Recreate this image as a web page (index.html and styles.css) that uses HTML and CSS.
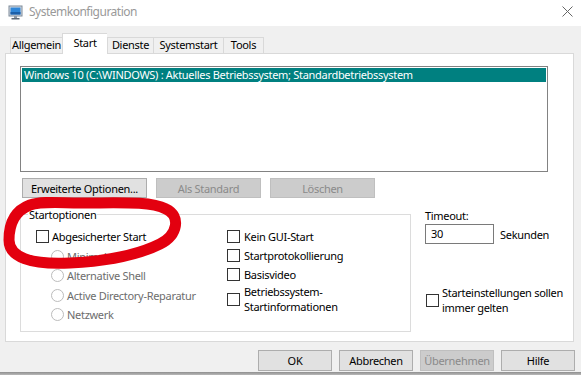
FILE: index.html
```html
<!DOCTYPE html>
<html lang="de">
<head>
    <meta charset="UTF-8">
    <meta name="viewport" content="width=device-width, initial-scale=1.0">
    <title>Systemkonfiguration</title>
    <link rel="stylesheet" href="styles.css">
</head>
<body>
    <div class="titlebar">
        <svg class="app-icon" width="15" height="15" viewBox="0 0 15 15">
            <rect x="1" y="1" width="13" height="10" fill="#d7dde5" stroke="#7d8a99"/>
            <rect x="2.5" y="2.5" width="10" height="7" fill="#2f86d8"/>
            <rect x="2.5" y="7" width="10" height="2.5" fill="#1c5fa8"/>
            <rect x="6" y="11" width="3" height="2" fill="#8b96a3"/>
            <rect x="3.5" y="13" width="8" height="1.5" fill="#5f6b78"/>
        </svg>
        <span class="title">Systemkonfiguration</span>
        <svg class="close" width="11" height="11" viewBox="0 0 11 11">
            <path d="M0.5 0.5L10.5 10.5M10.5 0.5L0.5 10.5" stroke="#666" stroke-width="1"/>
        </svg>
    </div>

    <div class="dialog">
        <div class="tabs">
            <div class="tab tab-allgemein">Allgemein</div>
            <div class="tab tab-start active">Start</div>
            <div class="tab tab-dienste">Dienste</div>
            <div class="tab tab-systemstart">Systemstart</div>
            <div class="tab tab-tools">Tools</div>
        </div>

        <div class="panel">
            <div class="listbox">
                <div class="list-item selected">Windows 10 (C:\WINDOWS) : Aktuelles Betriebssystem; Standardbetriebssystem</div>
            </div>

            <div class="btn-row">
                <button class="btn btn-wide">Erweiterte Optionen...</button>
                <button class="btn btn-mid" disabled>Als Standard</button>
                <button class="btn btn-mid" disabled>Löschen</button>
            </div>

            <div class="lower">
                <div class="group">
                    <span class="group-title">Startoptionen</span>
                    <div class="group-cols">
                        <div class="col-left">
                            <div class="opt opt-tall">
                                <span class="check"></span>
                                <span>Abgesicherter Start</span>
                            </div>
                            <div class="opt opt-tall radio-opt">
                                <span class="radio"></span>
                                <span>Minimal</span>
                            </div>
                            <div class="opt opt-tall radio-opt">
                                <span class="radio"></span>
                                <span>Alternative Shell</span>
                            </div>
                            <div class="opt opt-tall radio-opt">
                                <span class="radio"></span>
                                <span>Active Directory-Reparatur</span>
                            </div>
                            <div class="opt opt-tall radio-opt">
                                <span class="radio"></span>
                                <span>Netzwerk</span>
                            </div>
                        </div>
                        <div class="col-right">
                            <div class="opt">
                                <span class="check"></span>
                                <span>Kein GUI-Start</span>
                            </div>
                            <div class="opt">
                                <span class="check"></span>
                                <span>Startprotokollierung</span>
                            </div>
                            <div class="opt">
                                <span class="check"></span>
                                <span>Basisvideo</span>
                            </div>
                            <div class="opt opt-multi">
                                <span class="check"></span>
                                <span>Betriebssystem-<br>Startinformationen</span>
                            </div>
                        </div>
                    </div>
                </div>

                <div class="side">
                    <div class="timeout-label">Timeout:</div>
                    <div class="timeout-row">
                        <div class="textbox">30</div>
                        <span>Sekunden</span>
                    </div>
                    <div class="opt opt-multi persist">
                        <span class="check"></span>
                        <span>Starteinstellungen sollen<br>immer gelten</span>
                    </div>
                </div>
            </div>
        </div>

        <div class="footer">
            <button class="btn btn-foot">OK</button>
            <button class="btn btn-foot">Abbrechen</button>
            <button class="btn btn-foot" disabled>Übernehmen</button>
            <button class="btn btn-foot">Hilfe</button>
        </div>
    </div>
    <div class="shadow"></div>

    <!-- rote Markierung über dem Dialog -->
    <svg class="marker" width="200" height="100" viewBox="0 180 200 100">
        <path d="M9 240 C9 224 14 211 30 205 C42 201 60 203 80 203 C120 203 150 201 166 209 C181 216 178 235 160 244 C140 254 110 261 70 263 C30 265 9 257 9 240 Z"
              fill="none" stroke="#e3000f" stroke-width="11" stroke-linejoin="round"/>
    </svg>
</body>
</html>
```

FILE: styles.css
```css
* {
    margin: 0;
    padding: 0;
    box-sizing: border-box;
}

html, body {
    width: 581px;
    height: 375px;
    overflow: hidden;
}

body {
    position: relative;
    font-family: "Noto Sans", "Open Sans", sans-serif;
    font-size: 11px;
    letter-spacing: -0.3px;
    color: #000;
    background-color: #f0f0f0;
}

/* Titelleiste */
.titlebar {
    height: 26px;
    background-color: #fff;
    display: flex;
    align-items: center;
}

.app-icon {
    margin-left: 8px;
    margin-top: -2px;
}

.title {
    margin-left: 6px;
    color: #999;
    font-size: 12px;
    letter-spacing: -0.5px;
    margin-top: -3px;
}

.close {
    margin-left: auto;
    margin-right: 8px;
    margin-top: -4px;
}

/* Dialog */
.dialog {
    height: 346px;
    padding: 7px 0 0 5px;
}

.tabs {
    display: flex;
    align-items: flex-end;
    height: 20px;
    padding-left: 5px;
}

.tab {
    height: 16px;
    line-height: 14px;
    text-align: center;
    border: 1px solid #d9d9d9;
    border-right: none;
    border-bottom: none;
    background-color: #f0f0f0;
}

.tab-tools {
    border-right: 1px solid #d9d9d9;
}

.tab.active {
    height: 21px;
    line-height: 18px;
    background-color: #fff;
    margin-bottom: -1px;
    position: relative;
    z-index: 1;
}

.tab-allgemein { width: 52px; }
.tab-start { width: 45px; }
.tab-dienste { width: 46px; }
.tab-systemstart { width: 70px; }
.tab-tools { width: 41px; }

.panel {
    height: 289px;
    margin-right: 7px;
    border: 1px solid #d9d9d9;
    background-color: #fff;
    padding: 12px 0 0 14px;
}

.listbox {
    width: 528px;
    height: 106px;
    border: 1px solid #828282;
    padding: 1px;
}

.list-item {
    height: 14px;
    line-height: 14px;
    padding-left: 2px;
    white-space: nowrap;
}

.list-item.selected {
    background-color: #008080;
    color: #fff;
}

.btn-row {
    display: flex;
    margin-top: 6px;
    padding-left: 2px;
}

.btn {
    height: 20px;
    font-family: inherit;
    font-size: 11px;
    letter-spacing: -0.3px;
    color: #000;
    background-color: #e1e1e1;
    border: 1px solid #adadad;
}

.btn:disabled {
    background-color: #cccccc;
    border-color: #bfbfbf;
    color: #8a8a8a;
}

.btn-wide {
    width: 125px;
    margin-right: 9px;
}

.btn-mid {
    width: 105px;
    margin-right: 9px;
}

/* Startoptionen */
.lower {
    display: flex;
}

.group {
    width: 391px;
    height: 118px;
    margin-top: 16px;
    border: 1px solid #dcdcdc;
}

.group-title {
    display: table;
    margin: -8px 0 0 7px;
    padding: 0 1px;
    line-height: 15px;
    background-color: #fff;
}

.group-cols {
    display: flex;
    margin-top: 5px;
}

.col-left {
    width: 206px;
    padding-left: 15px;
}

.opt {
    display: flex;
    align-items: center;
    height: 19px;
    line-height: 15px;
}

.opt-tall {
    height: 19.5px;
}

.opt-multi {
    height: 30px;
}

.check {
    width: 13px;
    height: 13px;
    border: 1px solid #333;
    background-color: #fff;
    margin-right: 3px;
    flex-shrink: 0;
}

.col-right .check {
    margin-right: 4px;
}

.radio-opt {
    padding-left: 15px;
    color: #6d6d6d;
}

.radio {
    width: 13px;
    height: 13px;
    border: 1px solid #bcbcbc;
    border-radius: 50%;
    margin-right: 3px;
    flex-shrink: 0;
}

.side {
    margin-left: 14px;
}

.timeout-label {
    margin-top: 10px;
    line-height: 15px;
}

.timeout-row {
    display: flex;
    align-items: center;
    gap: 6px;
    margin-top: 1px;
}

.textbox {
    width: 69px;
    height: 20px;
    border: 1px solid #7a7a7a;
    padding-left: 5px;
    line-height: 18px;
}

.persist {
    margin-top: 41px;
    padding-left: 1px;
}

/* Fußzeile */
.footer {
    display: flex;
    justify-content: flex-end;
    gap: 7px;
    margin-top: 8px;
    margin-right: 6px;
}

.btn-foot {
    width: 74px;
    height: 21px;
}

.shadow {
    height: 3px;
    background: linear-gradient(#8e8e8e, #b9b9b9);
}

.marker {
    position: absolute;
    left: 0;
    top: 180px;
}
```
